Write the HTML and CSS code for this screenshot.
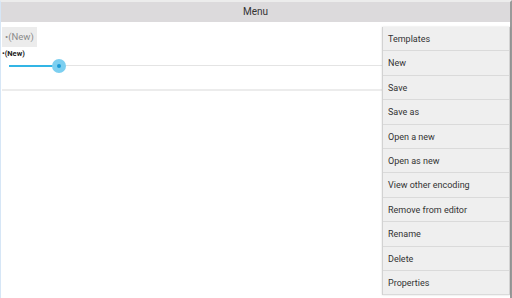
FILE: index.html
```html
<!DOCTYPE html>
<html lang="en">
<head>
    <meta charset="UTF-8">
    <title>Menu</title>
    <link rel="stylesheet" href="styles.css">
</head>
<body>
    <div class="screen">
        <div class="topbar">Menu</div>
        <div class="content">
            <div class="tab-button">•(New)</div>
            <div class="doc-label">•(New)</div>
            <div class="slider">
                <div class="slider-fill"></div>
                <div class="slider-thumb"></div>
            </div>
            <div class="divider"></div>
        </div>

        <ul class="popup-menu">
            <li>Templates</li>
            <li>New</li>
            <li>Save</li>
            <li>Save as</li>
            <li>Open a new</li>
            <li>Open as new</li>
            <li>View other encoding</li>
            <li>Remove from editor</li>
            <li>Rename</li>
            <li>Delete</li>
            <li>Properties</li>
        </ul>
    </div>
</body>
</html>
```

FILE: styles.css
```css
html, body {
    margin: 0;
    height: 100%;
}
body {
    background-color: #fff;
    font-family: Roboto, "Liberation Sans", sans-serif;
    overflow: hidden;
}
.screen {
    position: relative;
    height: 298px;
    border-left: 1px solid #d6e6f6;
    border-right: 2px solid #9a9a9a;
    border-top: 2px solid #ececec;
    box-sizing: border-box;
}
.topbar {
    height: 20px;
    background-color: #dcdadc;
    color: #333;
    font-size: 10px;
    line-height: 20px;
    text-align: center;
}
.content {
    padding: 3px 1px 0 1px;
}
.tab-button {
    display: inline-block;
    background-color: #ececec;
    color: #8a8a8a;
    font-size: 9.5px;
    height: 20px;
    line-height: 20px;
    padding: 0 3px;
}
.doc-label {
    font-size: 7.5px;
    font-weight: bold;
    color: #222;
    margin-top: 2px;
}
.slider {
    position: relative;
    height: 14px;
    margin: 1px 0 0 7px;
}
.slider::before {
    content: "";
    position: absolute;
    left: 0;
    right: 0;
    top: 6px;
    height: 1px;
    background-color: #e4e4e4;
}
.slider-fill {
    position: absolute;
    left: 0;
    top: 6px;
    width: 50px;
    height: 2px;
    background-color: #33b5e5;
}
.slider-thumb {
    position: absolute;
    left: 43px;
    top: 0;
    width: 14px;
    height: 14px;
    border-radius: 50%;
    background-color: #7ccff0;
}
.slider-thumb::after {
    content: "";
    position: absolute;
    left: 5px;
    top: 5px;
    width: 4px;
    height: 4px;
    border-radius: 50%;
    background-color: #1a9ad6;
}
.divider {
    height: 2px;
    background-color: #ececec;
    margin-top: 16px;
}
.popup-menu {
    position: absolute;
    top: 25px;
    left: 381px;
    width: 126px;
    margin: 0;
    padding: 0;
    list-style: none;
    background-color: #efefef;
    border-left: 1px solid #d2d2d2;
    border-right: 1px solid #d2d2d2;
    box-shadow: 0 0 2px rgba(0, 0, 0, 0.15);
}
.popup-menu li {
    height: 23.4px;
    line-height: 25px;
    padding-left: 5px;
    font-size: 9px;
    color: #333;
    border-bottom: 1px solid #dadada;
}
```
